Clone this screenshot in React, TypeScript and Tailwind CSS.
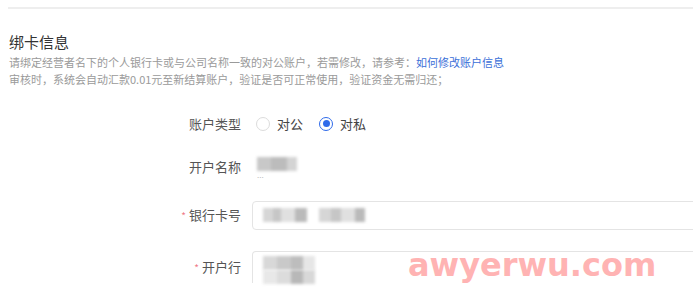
import React from 'react';

function Radio({ checked, label }: { checked: boolean; label: string }) {
  return (
    <label className="flex items-center gap-[7px]">
      <span
        className={`flex h-[14px] w-[14px] items-center justify-center rounded-full border ${
          checked ? 'border-[#2f6bea]' : 'border-[#dcdcdc]'
        } bg-white`}
      >
        {checked ? <span className="h-[7px] w-[7px] rounded-full bg-[#2f6bea]" /> : null}
      </span>
      <span className="text-[13px] text-[#444]">{label}</span>
    </label>
  );
}

function Blur({ widths, tones }: { widths: number[]; tones: string[] }) {
  return (
    <div className="flex blur-[1.5px]">
      {widths.map((w, i) => (
        <span key={i} className="h-[14px]" style={{ width: w, background: tones[i % tones.length] }} />
      ))}
    </div>
  );
}

function Row({ label, required, children, className }: { label: string; required?: boolean; children: React.ReactNode; className?: string }) {
  return (
    <div className={`flex items-center ${className ?? ''}`}>
      <div className="w-[242px] shrink-0 pr-[1px] text-right text-[13px] text-[#555]">
        {required ? <span className="mr-[3px] text-[10px] text-[#f07a8a]">*</span> : null}
        {label}
      </div>
      <div className="ml-[10px] flex-1">{children}</div>
    </div>
  );
}

export default function App() {
  return (
    <div
      className="relative h-[298px] w-[693px] overflow-hidden bg-white"
      style={{ fontFamily: '"Noto Sans CJK SC", "Liberation Sans", sans-serif' }}
    >
      <div className="ml-[8px] mt-[7px] h-[2px] bg-[#eeeeee]" />

      <div className="pl-[9px]">
        <h2 className="mt-[22px] text-[15px] leading-[22px] text-[#333]">绑卡信息</h2>
        <p className="mt-[1px] text-[11px] leading-[17px] text-[#9a9a9a]">
          请绑定经营者名下的个人银行卡或与公司名称一致的对公账户，若需修改，请参考：
          <span className="text-[#3b6fd8]">如何修改账户信息</span>
          <br />
          审核时，系统会自动汇款0.01元至新结算账户，验证是否可正常使用，验证资金无需归还；
        </p>
      </div>

      <Row label="账户类型" className="mt-[26px]">
        <div className="ml-[4px] flex items-center gap-[16px]">
          <Radio checked={false} label="对公" />
          <Radio checked label="对私" />
        </div>
      </Row>

      <Row label="开户名称" className="mt-[23px]">
        <div className="ml-[5px] flex flex-col">
          <Blur widths={[14, 16, 10]} tones={['#c8c8c8', '#bcbcbc', '#d4d4d4']} />
          <span className="mt-[1px] text-[8px] leading-[6px] text-[#bbb]">...</span>
        </div>
      </Row>

      <Row label="银行卡号" required className="mt-[23px]">
        <div className="-mr-[20px] flex h-[29px] items-center rounded-[4px] border border-[#e4e4e4] pl-[10px]">
          <Blur widths={[10, 8, 14, 12, 12, 12, 10, 14, 10, 8]} tones={['#d6d6d6', '#c6c6c6', '#e0e0e0', '#bababa', '#fff']} />
        </div>
      </Row>

      <Row label="开户行" required className="mt-[21px]">
        <div className="-mr-[20px] flex h-[32px] items-start rounded-t-[4px] border border-b-0 border-[#e4e4e4] pl-[10px] pt-[4px]">
          <div className="flex flex-col">
            <Blur widths={[14, 14, 12, 12]} tones={['#d8d8d8', '#c9c9c9', '#bdbdbd', '#e6e6e6']} />
            <Blur widths={[14, 14, 12, 12]} tones={['#e8e8e8', '#dcdcdc', '#b8b8b8', '#d8d8d8']} />
          </div>
        </div>
      </Row>

      <div
        className="absolute left-[408px] top-[247px] text-[32px] font-bold leading-[36px] text-[#ffb3b3]"
        style={{ fontFamily: '"DejaVu Sans", sans-serif' }}
      >
        awyerwu.com
      </div>
    </div>
  );
}
